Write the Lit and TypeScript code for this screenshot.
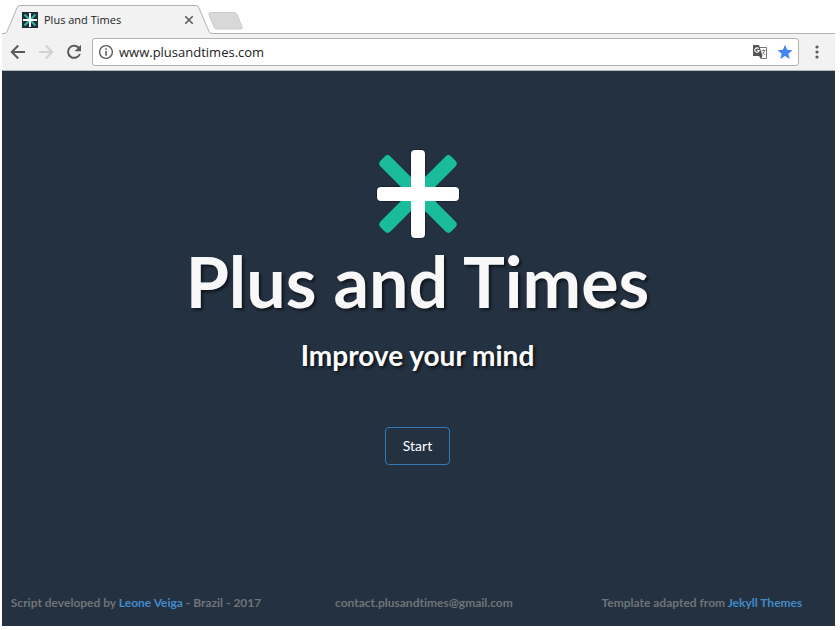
import { LitElement, html, css, svg } from "lit";
import { customElement } from "lit/decorators.js";

const mark = svg`
  <g fill="#1a2430">
    <rect x="34" y="0" width="16" height="90" rx="5"></rect>
    <rect x="0" y="37" width="84" height="16" rx="5"></rect>
  </g>
  <g fill="#1abc9c" stroke="#1b3a44" stroke-width="1" paint-order="stroke">
    <rect x="-50" y="-7" width="100" height="14" rx="4" transform="translate(42 45) rotate(45)"></rect>
    <rect x="-50" y="-7" width="100" height="14" rx="4" transform="translate(42 45) rotate(-45)"></rect>
  </g>
  <g fill="#fff">
    <rect x="35" y="1" width="14" height="88" rx="4"></rect>
    <rect x="1" y="38" width="82" height="14" rx="4"></rect>
  </g>`;

@customElement("browser-chrome")
class BrowserChrome extends LitElement {
  static styles = css`
    :host { display: block; font-family: "Open Sans", sans-serif; color: #222; }
    button { border: 0; padding: 0; background: none; display: flex; }
    svg { display: block; }
    .tabs { display: flex; height: 29px; background: linear-gradient(#b2b2b2, #b2b2b2) bottom / 100% 1px no-repeat; }
    .tab { position: relative; width: 212px; height: 29px; box-sizing: border-box; padding: 0 14px 0 20px; display: flex; align-items: center; }
    .shape { position: absolute; left: 0; top: 0; }
    .favicon { position: relative; margin-right: 6px; }
    .title { position: relative; flex: 1; font-size: 11px; line-height: 16px; }
    .close { position: relative; margin-right: 6px; }
    .new { align-self: flex-start; margin: 7px 0 0 -6px; }
    .bar { display: flex; align-items: center; height: 36px; padding: 0 10px 0 8px; background: #f2f2f2; border-bottom: 1px solid #b8b8b8; }
    .nav { display: flex; gap: 12px; margin-right: 10px; }
    .box { flex: 1; min-width: 0; height: 28px; box-sizing: border-box; display: flex; align-items: center; gap: 5px; padding: 0 5px; background: #fff; border: 1px solid #b2b2b2; border-radius: 3px; }
    .url { flex: 1; min-width: 0; border: 0; padding: 0; outline: 0; background: none; color: #222; font: 13px/20px "Open Sans", sans-serif; }
    .box button { margin-left: 4px; }
    .menu { margin-left: 10px; }
  `;
  render() {
    return html`
      <div class="tabs">
        <div class="tab">
          <svg class="shape" width="212" height="29"><path d="M0 28.5H2Q4 28.5 5 26.5L15 3Q16 .5 18 .5H194Q196 .5 197 3L207 26.5Q208 28.5 210 28.5H212V29H0Z" fill="#f2f2f2"></path><path d="M0 28.5H2Q4 28.5 5 26.5L15 3Q16 .5 18 .5H194Q196 .5 197 3L207 26.5Q208 28.5 210 28.5H212" fill="none" stroke="#b2b2b2"></path></svg>
          <svg class="favicon" width="16" height="16" viewBox="0 0 16 16"><path fill="#1f2d3a" d="M0 0H16V16H0Z"></path><path d="M2.500 2.500L13.500 13.500M13.500 2.500L2.500 13.500" stroke="#2fb8a0" stroke-width="2"></path><path d="M8 1V15M1 8H15" stroke="#fff" stroke-width="2"></path></svg>
          <span class="title">Plus and Times</span>
          <button class="close" aria-label="Close tab"><svg width="10" height="10"><path d="M1.3 1.3L8.7 8.7M8.7 1.3L1.3 8.7" stroke="#5a5a5a" stroke-width="1.6"></path></svg></button>
        </div>
        <button class="new" aria-label="New tab"><svg width="36" height="18"><path d="M3 .5H26Q28 .5 29 2.500L34 14.500Q35 17 33 17H9Q7 17 6 15L1 3Q0 .5 3 .5Z" fill="#d8d8d8" stroke="#cbcbcb"></path></svg></button>
      </div>
      <div class="bar">
        <div class="nav">
          <button aria-label="Back"><svg width="16" height="16"><path d="M8.200 1.500L1.800 8L8.200 14.500M2 8H15" fill="none" stroke="#5a5a5a" stroke-width="2"></path></svg></button>
          <button aria-label="Forward"><svg width="16" height="16"><path d="M7.800 1.500L14.200 8L7.800 14.500M14 8H1" fill="none" stroke="#d2d2d2" stroke-width="2"></path></svg></button>
          <button aria-label="Reload"><svg width="16" height="16"><path d="M13.300 4.500A6.100 6.100 0 1 0 13.800 10" fill="none" stroke="#5a5a5a" stroke-width="2"></path><path d="M15 .8V7.200H8.600Z" fill="#5a5a5a"></path></svg></button>
        </div>
        <div class="box">
          <svg width="16" height="16"><circle cx="8" cy="8" r="6.400" fill="none" stroke="#5a5a5a" stroke-width="1.400"></circle><path d="M7.200 7H8.800V11.800H7.200ZM7.200 4.200H8.800V5.800H7.200Z" fill="#5a5a5a"></path></svg>
          <input class="url" aria-label="Address" value="www.plusandtimes.com">
          <button aria-label="Translate"><svg width="16" height="16"><path d="M7 3.500H14.500V14.500H9" fill="#fff" stroke="#777"></path><path d="M1.500 1H7L10.500 12H1.500Q1 12 1 11.500V1.500Q1 1 1.500 1Z" fill="#555"></path><path d="M6.800 4.700A2.200 2.200 0 1 0 7.200 6.500H5" fill="none" stroke="#fff" stroke-width="1.100"></path><path d="M9.500 6.500H13.500M11.500 5.500V6.500M12.700 6.500Q12.200 9 10.500 10M10.500 8Q11.500 10 13 11" fill="none" stroke="#777" stroke-width=".9"></path><path d="M7 12H10.500L9 15Z" fill="#555"></path></svg></button>
          <button aria-label="Bookmark"><svg width="16" height="16"><path d="M8 .8L10.100 5.800L15.500 6.200L11.400 9.700L12.700 15L8 12.100L3.300 15L4.600 9.700L.5 6.200L5.900 5.800Z" fill="#4285f4"></path></svg></button>
        </div>
        <button class="menu" aria-label="Menu"><svg width="16" height="16" fill="#5a5a5a"><circle cx="8" cy="3" r="1.600"></circle><circle cx="8" cy="8" r="1.600"></circle><circle cx="8" cy="13" r="1.600"></circle></svg></button>
      </div>`;
  }
}

@customElement("app-root")
class AppRoot extends LitElement {
  static styles = css`
    :host { display: flex; flex-direction: column; box-sizing: border-box; min-height: 100vh; padding: 5px 5px 4px 2px; background: #fff; font-family: Lato, sans-serif; font-variant-ligatures: none; }
    .page { flex: 1; display: flex; flex-direction: column; background: #243140; }
    main { flex: 1; display: flex; flex-direction: column; align-items: center; padding: 78px 2px 0 0; text-align: center; }
    svg { display: block; }
    h1 { margin: 2px 0 18px; font-size: 70px; line-height: 80px; font-weight: 700; color: #f8f8f8; text-shadow: 2px 2px 3px rgba(0, 0, 0, .6); }
    h2 { margin: 0 0 56px; font-size: 28px; line-height: 32px; font-weight: 700; color: #fff; text-shadow: 2px 2px 3px rgba(0, 0, 0, .6); }
    .start { height: 38px; padding: 0 17px; border: 1px solid #337ab7; border-radius: 4px; background: none; color: #fff; font: 14px/20px Lato, sans-serif; }
    footer { display: grid; grid-template-columns: 27fr 31fr 25fr; padding: 0 9px 15px 0; text-align: center; white-space: nowrap; font-size: 12px; line-height: 16px; font-weight: 700; color: #6f7478; }
    a { color: #428bca; text-decoration: none; }
  `;
  render() {
    return html`
      <browser-chrome></browser-chrome>
      <div class="page">
        <main>
          <svg width="84" height="90" viewBox="0 0 84 90" aria-hidden="true">${mark}</svg>
          <h1>Plus and Times</h1>
          <h2>Improve your mind</h2>
          <button class="start">Start</button>
        </main>
        <footer>
          <span>Script developed by <a href="#leone">Leone Veiga</a> - Brazil - 2017</span>
          <span>contact.plusandtimes@gmail.com</span>
          <span>Template adapted from <a href="#themes">Jekyll Themes</a></span>
        </footer>
      </div>`;
  }
}
